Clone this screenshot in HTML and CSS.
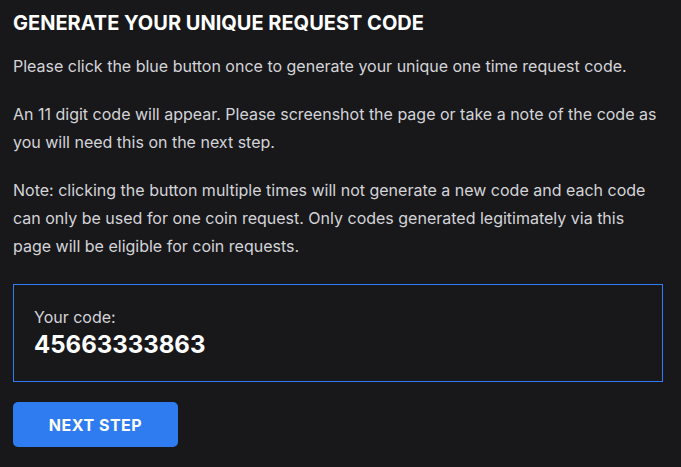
FILE: index.html
```html
<!DOCTYPE html>
<html lang="en">
<head>
  <meta charset="UTF-8" />
  <meta name="viewport" content="width=device-width, initial-scale=1.0"/>
  <title>Generate Request Code</title>
  <link rel="stylesheet" href="styles.css">
</head>
<body>
  <div class="panel">
    <h1>Generate your unique request code</h1>
    <p>Please click the blue button once to generate your unique one time request code.</p>
    <p>An 11 digit code will appear. Please screenshot the page or take a note of the code as you will need this on the next step.</p>
    <p>Note: clicking the button multiple times will not generate a new code and each code can only be used for one coin request. Only codes generated legitimately via this page will be eligible for coin requests.</p>

    <div class="code-box">
      <span class="code-label">Your code:</span>
      <span class="code-value">45663333863</span>
    </div>

    <button class="next-btn">Next step</button>
  </div>
</body>
</html>
```

FILE: styles.css
```css
* { box-sizing: border-box; }

body {
  margin: 0;
  font-family: 'Inter', sans-serif;
  background: #18181b;
  color: #d4d4d8;
  min-height: 100vh;
}

.panel {
  padding: 9px 18px 20px 13px;
}

h1 {
  font-size: 20px;
  font-weight: 700;
  line-height: 28px;
  text-transform: uppercase;
  color: #ffffff;
  margin: 0 0 15px;
}

p {
  font-size: 16px;
  line-height: 28px;
  margin: 0 0 20px;
}

.code-box {
  border: 1px solid #2f7cf6;
  padding: 20px 20px;
  margin-top: 24px;
  display: flex;
  flex-direction: column;
}

.code-label {
  font-size: 16px;
  line-height: 24px;
  color: #d4d4d8;
}

.code-value {
  font-size: 24px;
  font-weight: 700;
  line-height: 32px;
  color: #ffffff;
}

.next-btn {
  margin-top: 20px;
  width: 165px;
  height: 45px;
  border: none;
  border-radius: 5px;
  background: #2f7cf0;
  color: #ffffff;
  font-family: 'Inter', sans-serif;
  font-size: 16px;
  font-weight: 700;
  letter-spacing: 0.5px;
  text-transform: uppercase;
  cursor: pointer;
}
```
